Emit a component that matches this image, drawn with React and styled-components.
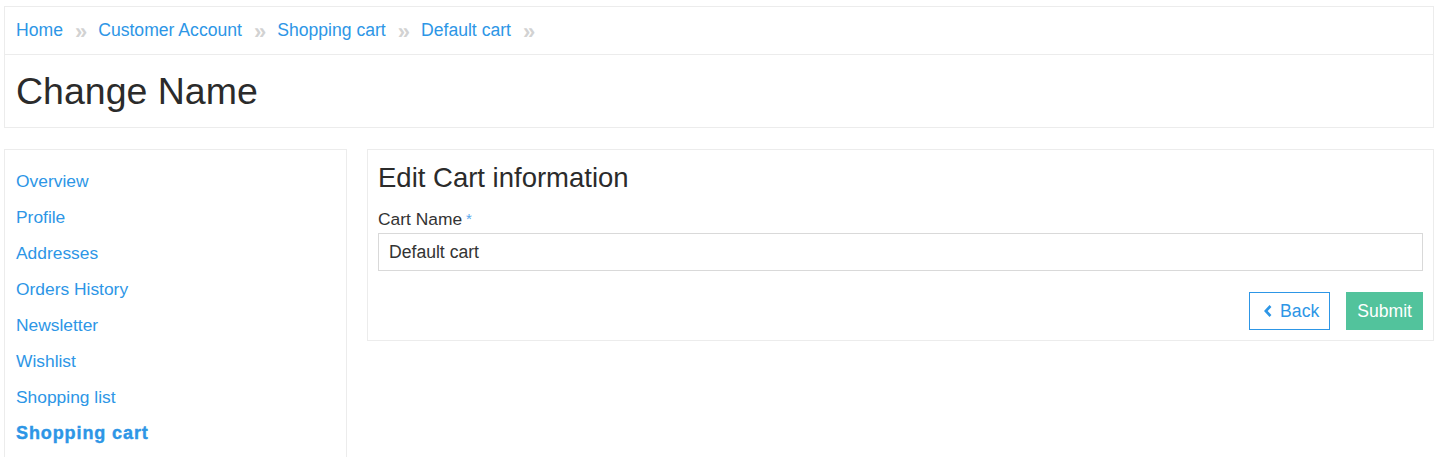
import React from "react";
import styled, { createGlobalStyle } from "styled-components";

const Global = createGlobalStyle`
  html, body { margin: 0; padding: 0; background: #fff; }
  body { font-family: "Liberation Sans", Arial, sans-serif; color: #333; }
  * { box-sizing: border-box; }
`;

const Page = styled.div`
  padding: 6px 1px 0 4px;
  display: flex;
  flex-direction: column;
  gap: 21px;
`;

const Card = styled.div`
  border: 1px solid #ececec;
  background: #fff;
`;

const Crumbs = styled.nav`
  height: 48px;
  display: flex;
  align-items: center;
  padding: 0 11px;
  border-bottom: 1px solid #ececec;
  font-size: 17.6px;
`;

const CrumbLink = styled.a`
  color: #2d96e6;
  text-decoration: none;
`;

const Sep = styled.span`
  color: #d2d2d2;
  font-size: 22px;
  font-weight: bold;
  margin: 0 11px 0 12px;
  line-height: 1;
  position: relative;
  top: 1px;
`;

const TitleRow = styled.div`
  height: 72px;
  display: flex;
  align-items: center;
  padding: 0 11px;
`;

const Title = styled.h1`
  margin: 0;
  font-size: 37.5px;
  font-weight: normal;
  color: #2b2b2b;
`;

const Columns = styled.div`
  display: grid;
  grid-template-columns: 343px 1fr;
  gap: 20px;
  align-items: start;
`;

const Side = styled(Card)`
  padding: 13px 11px 0;
  min-height: 320px;
`;

const NavList = styled.ul`
  list-style: none;
  margin: 0;
  padding: 0;
`;

const NavItem = styled.li`
  height: 36px;
  line-height: 36px;
  font-size: 17.4px;
`;

const NavLink = styled.a`
  color: #2d96e6;
  text-decoration: none;
  font-weight: ${(p) => (p.$active ? "bold" : "normal")};
  letter-spacing: ${(p) => (p.$active ? "0.9px" : "normal")};
  -webkit-text-stroke: ${(p) => (p.$active ? "0.4px #2d96e6" : "0")};
  font-size: ${(p) => (p.$active ? "18px" : "inherit")};
`;

const Main = styled(Card)`
  padding: 9px 10px 10px 10px;
`;

const Heading = styled.h2`
  margin: 0;
  font-size: 27.5px;
  font-weight: normal;
  color: #2b2b2b;
  line-height: 38px;
`;

const Label = styled.label`
  display: block;
  margin-top: 11px;
  font-size: 17.4px;
  line-height: 22px;
  color: #333;
`;

const Req = styled.span`
  color: #5aa8ec;
  font-size: 15px;
  margin-left: 4px;
  vertical-align: top;
`;

const Input = styled.input`
  display: block;
  width: 100%;
  height: 38px;
  margin-top: 3px;
  border: 1px solid #d9d9d9;
  padding: 0 10px;
  font-family: inherit;
  font-size: 17.6px;
  color: #333;
  outline: none;
`;

const Actions = styled.div`
  display: flex;
  justify-content: flex-end;
  gap: 16px;
  margin-top: 21px;
`;

const Button = styled.button`
  height: 38px;
  display: inline-flex;
  align-items: center;
  gap: 7px;
  padding: ${(p) => (p.$primary ? "0 10px" : "0 10px 0 13px")};
  font-family: inherit;
  font-size: 17.6px;
  cursor: pointer;
  border: 1px solid ${(p) => (p.$primary ? "#52c39c" : "#2d96e6")};
  background: ${(p) => (p.$primary ? "#52c39c" : "#fff")};
  color: ${(p) => (p.$primary ? "#fff" : "#2d96e6")};
`;

const nav = [
  "Overview",
  "Profile",
  "Addresses",
  "Orders History",
  "Newsletter",
  "Wishlist",
  "Shopping list",
  "Shopping cart",
];

const crumbs = ["Home", "Customer Account", "Shopping cart", "Default cart"];

export default function App() {
  return (
    <>
      <Global />
      <Page>
        <Card>
          <Crumbs>
            {crumbs.map((c) => (
              <React.Fragment key={c}>
                <CrumbLink href="#">{c}</CrumbLink>
                <Sep>»</Sep>
              </React.Fragment>
            ))}
          </Crumbs>
          <TitleRow>
            <Title>Change Name</Title>
          </TitleRow>
        </Card>
        <Columns>
          <Side>
            <NavList>
              {nav.map((n) => (
                <NavItem key={n}>
                  <NavLink href="#" $active={n === "Shopping cart"}>
                    {n}
                  </NavLink>
                </NavItem>
              ))}
            </NavList>
          </Side>
          <Main>
            <Heading>Edit Cart information</Heading>
            <Label>
              Cart Name<Req>*</Req>
            </Label>
            <Input defaultValue="Default cart" />
            <Actions>
              <Button>
                <svg width="10" height="16" viewBox="0 0 10 16">
                  <path d="M7.5 3 L2.8 8 L7.5 13" fill="none" stroke="#2d96e6" strokeWidth="2.6" />
                </svg>
                Back
              </Button>
              <Button $primary>Submit</Button>
            </Actions>
          </Main>
        </Columns>
      </Page>
    </>
  );
}
